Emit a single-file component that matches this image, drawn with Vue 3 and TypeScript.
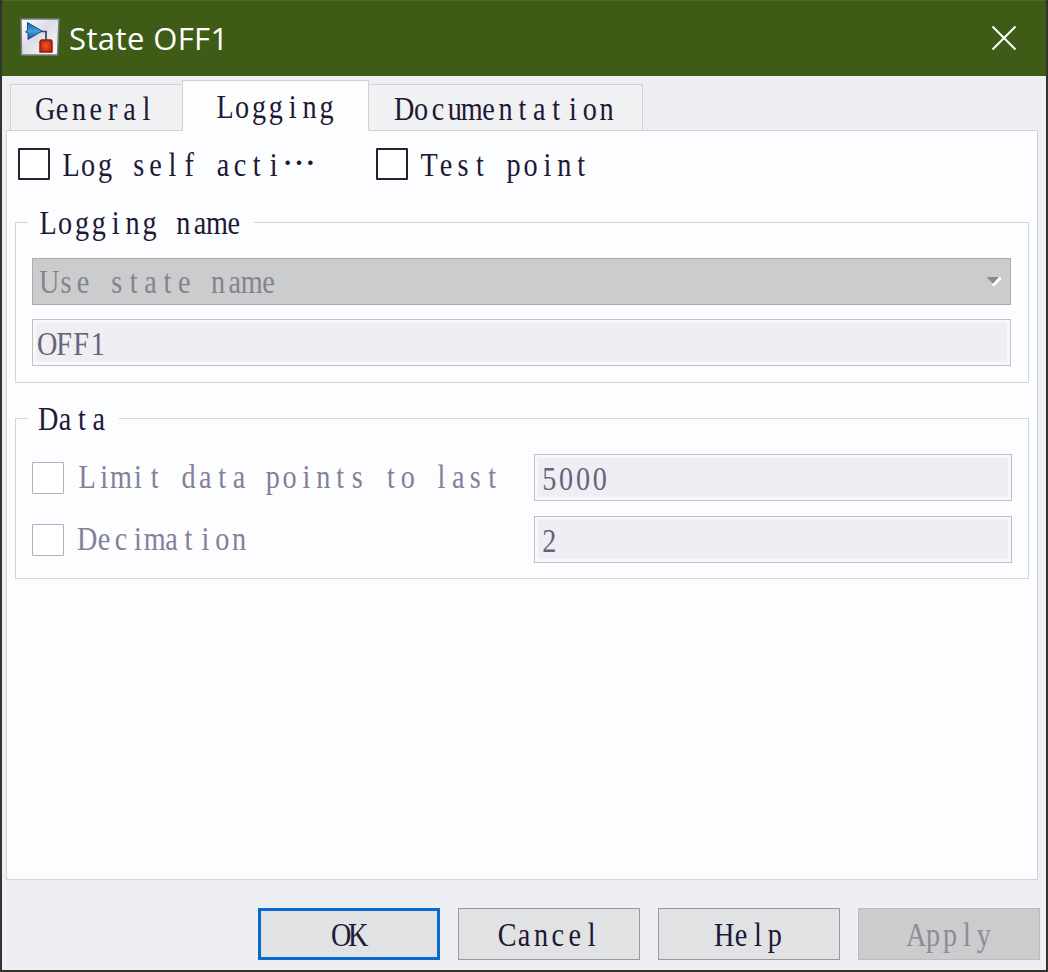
<script setup lang="ts">
import { h, ref } from 'vue'

// Width of one character cell in the dialog's fixed-pitch face.
const PITCH = 16.87
const SQUEEZE = 0.83

// Renders a string on a fixed grid, each glyph centred in its own cell.
const CellText = (props: { text: string }) => {
  const count = props.text.length
  const xs = Array.from({ length: count }, (_, i) => (((i + 0.5) * PITCH + 0.8) / SQUEEZE).toFixed(2))
  return h('svg', { class: 'cell-text', width: Math.ceil(count * PITCH), height: 34 }, [
    h('text', { x: xs.join(' '), y: 26.5, 'text-anchor': 'middle', fill: 'currentColor', transform: `scale(${SQUEEZE} 1)` }, props.text),
  ])
}
CellText.props = ['text']

const tabs = ['General', 'Logging', 'Documentation']
const activeTab = ref('Logging')

const limits = [
  { label: 'Limit data points to last', value: '5000' },
  { label: 'Decimation', value: '2' },
]

const buttons = [
  { label: 'OK', kind: 'primary' },
  { label: 'Cancel', kind: 'plain' },
  { label: 'Help', kind: 'plain' },
  { label: 'Apply', kind: 'disabled' },
]
</script>

<template>
  <div class="window">
    <header class="titlebar">
      <svg class="logo" width="40" height="40" viewBox="0 0 40 40">
        <defs>
          <linearGradient id="tile" x1="0" y1="0" x2="1" y2="1">
            <stop offset="0" stop-color="#fff" />
            <stop offset=".45" stop-color="#dcdce4" />
            <stop offset="1" stop-color="#fff" />
          </linearGradient>
          <linearGradient id="blue" x1="0" y1="0" x2="0" y2="1">
            <stop offset="0" stop-color="#155fae" />
            <stop offset=".5" stop-color="#47a0e0" />
            <stop offset="1" stop-color="#124d9b" />
          </linearGradient>
          <radialGradient id="red">
            <stop offset="0" stop-color="#f4562a" />
            <stop offset="1" stop-color="#c52b0b" />
          </radialGradient>
        </defs>
        <path d="M1 1H39L37.500 37H1.500Z" fill="url(#tile)" stroke="#777b86" stroke-width="1.500" />
        <path d="M20 13.500H26V22" fill="none" stroke="#38455f" stroke-width="1.700" />
        <path d="M7.500 4.500L22 13L8 21.500V15L5.500 14L7.500 12Z" fill="url(#blue)" stroke="#174f91" stroke-width="1" />
        <path d="M21.500 22H31L32 23.500V34H20V23.500Z" fill="url(#red)" stroke="#8d210d" stroke-width="1.500" />
      </svg>
      <h1 class="title">State OFF1</h1>
      <svg class="close" width="28" height="28" viewBox="0 0 28 28">
        <path d="M2.500 2.500L25.500 25.500M25.500 2.500L2.500 25.500" stroke="#fff" stroke-width="2" />
      </svg>
    </header>

    <nav class="tabs">
      <div
        v-for="tab in tabs"
        :key="tab"
        class="tab"
        :class="[tab.toLowerCase(), { active: tab === activeTab }]"
        @click="activeTab = tab"
      >
        <CellText :text="tab" />
      </div>
    </nav>

    <main class="panel">
      <div class="options">
        <label class="option first">
          <span class="box"></span>
          <CellText text="Log self acti" /><span class="dots">…</span>
        </label>
        <label class="option">
          <span class="box"></span>
          <CellText text="Test point" />
        </label>
      </div>

      <section class="group naming">
        <div class="legend"><CellText text="Logging name" /></div>
        <div class="select">
          <CellText text="Use state name" />
          <svg class="arrow" width="16" height="12" viewBox="0 0 16 12">
            <path d="M5.500 9.500L8.500 10L15 3.500V1L12.500 1Z" fill="#fff" />
            <path d="M0.500 1H13L7 7.500Z" fill="#8a8a8d" />
          </svg>
        </div>
        <div class="field"><CellText text="OFF1" /></div>
      </section>

      <section class="group data">
        <div class="legend"><CellText text="Data" /></div>
        <div v-for="item in limits" :key="item.label" class="limit">
          <span class="box"></span>
          <CellText :text="item.label" />
          <div class="field"><CellText :text="item.value" /></div>
        </div>
      </section>
    </main>

    <footer class="actions">
      <button v-for="b in buttons" :key="b.label" class="button" :class="b.kind">
        <CellText :text="b.label" />
      </button>
    </footer>
  </div>
</template>

<style>
body {
  margin: 0;
}
</style>

<style scoped>
.window {
  box-sizing: border-box;
  width: 1048px;
  height: 972px;
  display: flex;
  flex-direction: column;
  background: #eeeff2;
  border: solid #33352c;
  border-width: 0 2px 2px;
  font-family: 'Liberation Serif', serif;
  font-size: 34px;
  color: #1d1936;
  overflow: hidden;
}
.cell-text {
  display: block;
  flex: none;
  overflow: visible;
}
.titlebar {
  flex: none;
  box-sizing: border-box;
  height: 76px;
  margin: 0 -2px;
  padding: 0 30px 0 20px;
  display: flex;
  align-items: center;
  background: #3e5c15;
  border-top: 1px solid #4d692b;
  border-bottom: 1px solid #385a0b;
}
.title {
  margin: 0 auto 0 9px;
  font: 400 31px 'Open Sans', 'Noto Sans', sans-serif;
  letter-spacing: 0.4px;
  color: #fff;
}
.tabs {
  flex: none;
  height: 55px;
  padding-left: 8px;
  display: flex;
  align-items: flex-end;
  position: relative;
}
.tab {
  box-sizing: border-box;
  height: 47px;
  padding-top: 8px;
  background: #f0f1f3;
  border: 1px solid #cfd2d6;
}
.general {
  width: 172px;
  padding-left: 25px;
  border-right: 0;
}
.logging {
  width: 187px;
  padding-left: 33px;
}
.documentation {
  width: 274px;
  padding-left: 26px;
  border-left: 0;
}
.active {
  height: 51px;
  padding-top: 10px;
  background: #fdfdfe;
  border-bottom-color: #fdfdfe;
}
.panel {
  box-sizing: border-box;
  height: 750px;
  margin: -1px 8px 0 4px;
  padding: 17px 8px 0;
  background: #fcfdfe;
  border: 1px solid #d0d3d8;
}
.options {
  display: flex;
  height: 74px;
  padding-left: 3px;
}
.option {
  display: flex;
}
.first {
  width: 358px;
}
.box {
  box-sizing: border-box;
  flex: none;
  width: 32px;
  height: 32px;
  margin-right: 12px;
  border: 2px solid #25232e;
  border-radius: 1px;
  background: #fff;
}
.option .cell-text {
  margin-top: 1px;
}
.dots {
  margin-top: -3px;
  font: 34px/34px 'Noto Sans CJK SC', sans-serif;
}
.group {
  box-sizing: border-box;
  width: 1014px;
  height: 161px;
  border: 1px solid #d2d5da;
  padding: 0 16px;
}
.data {
  margin-top: 35px;
}
.legend {
  width: fit-content;
  height: 34px;
  margin: -16px 0 0 -4px;
  padding: 0 12px 0 11px;
  background: #fcfdfe;
}
.select,
.field {
  box-sizing: border-box;
  height: 47px;
  border: 1px solid #bfc1c7;
}
.select {
  display: flex;
  justify-content: space-between;
  align-items: center;
  margin: 17px 0 14px;
  padding: 3px 8px 0 7px;
  width: 979px;
  background: #cbccce;
  border-color: #a9abae;
  color: #85848a;
}
.select .arrow {
  margin-top: -2px;
}
.field {
  width: 979px;
  padding: 8px 0 0 5px;
  background: #eeeff2;
  box-shadow: inset 0 0 0 3px #f7f8fb;
  color: #66637a;
}
.limit {
  display: flex;
  align-items: center;
  margin-bottom: 15px;
  height: 47px;
  color: #857f9a;
}
.data .legend {
  margin-bottom: 17px;
}
.limit .box {
  border: 1px solid #aeb1bb;
  margin-right: 14px;
}
.limit .field {
  width: 478px;
  margin-left: auto;
}
.actions {
  display: flex;
  justify-content: flex-end;
  gap: 18px;
  padding: 28px 6px 0 0;
}
.button {
  box-sizing: border-box;
  width: 182px;
  height: 52px;
  padding: 4px 0 0;
  display: flex;
  justify-content: center;
  align-items: center;
  font: inherit;
  color: #1d1936;
  background: #e1e2e4;
  border: 1px solid #97999d;
  border-radius: 0;
}
.primary {
  border: 3px solid #0869cf;
}
.disabled {
  background: #cbccce;
  border-color: #bbbdc0;
  color: #8d8d92;
}
</style>
